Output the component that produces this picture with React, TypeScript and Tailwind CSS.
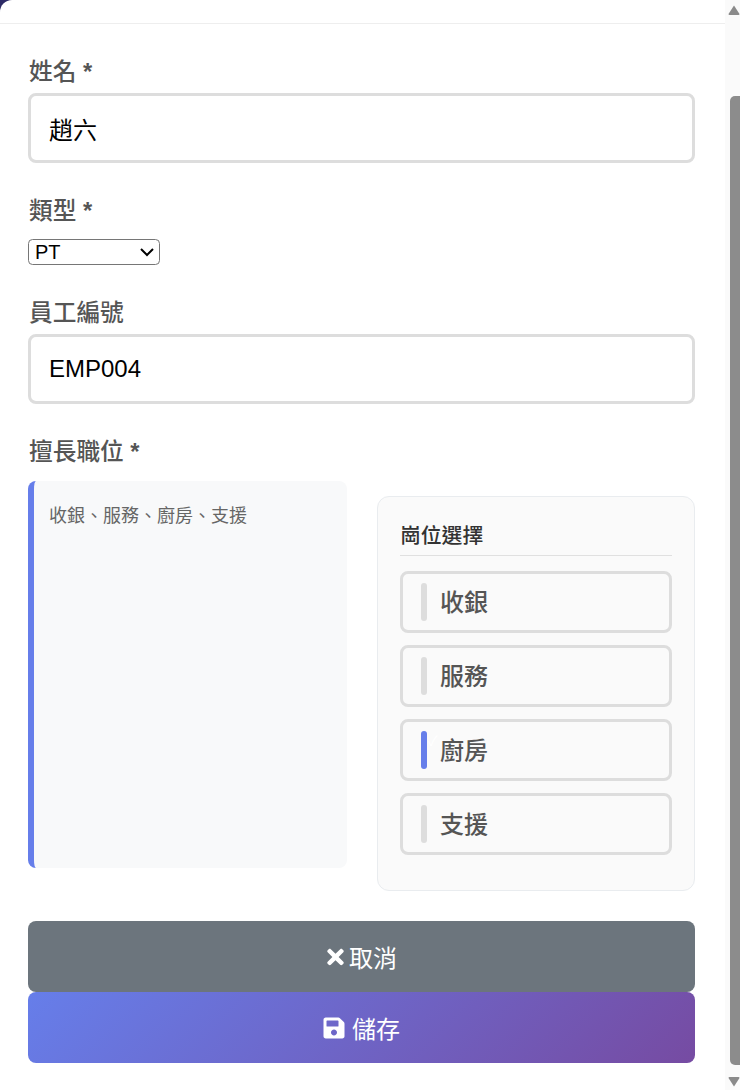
import { FaTimes, FaSave } from "react-icons/fa";

const positions = [
  { name: "收銀", selected: false },
  { name: "服務", selected: false },
  { name: "廚房", selected: true },
  { name: "支援", selected: false },
];

const font = "font-['Liberation_Sans','Noto_Sans_CJK_TC',sans-serif]";

function Label({ text, required, className = "" }: { text: string; required?: boolean; className?: string }) {
  return (
    <label className={`block text-[23.7px] leading-[34px] font-medium text-[#555] ml-px ${className}`}>
      {text}
      {required && <span className="font-bold"> *</span>}
    </label>
  );
}

function TextField({ value }: { value: string }) {
  return (
    <input
      readOnly
      value={value}
      className="block w-full h-[70px] border-[3px] border-[#ddd] rounded-lg pl-[18px] text-[24px] text-black bg-white outline-none"
    />
  );
}

function Scrollbar() {
  return (
    <aside className="w-[15px] bg-[#fafafa] flex flex-col items-end shrink-0">
      <svg width="12" height="10" viewBox="0 0 12 10" className="mt-[5px] shrink-0">
        <path d="M6 0.5 L11.5 9 Q11.5 10 10.5 10 L1.5 10 Q0.5 10 0.5 9 Z" fill="#8a8a8a" />
      </svg>
      <div className="w-[10px] h-[969px] mt-[81px] bg-[#8c8c8c] rounded-l-[5px] shrink-0" />
      <svg width="12" height="10" viewBox="0 0 12 10" className="mt-[12px] shrink-0">
        <path d="M6 9.5 L11.5 1 Q11.5 0 10.5 0 L1.5 0 Q0.5 0 0.5 1 Z" fill="#8a8a8a" />
      </svg>
    </aside>
  );
}

export default function App() {
  return (
    <div className={`w-[740px] h-[1090px] overflow-hidden flex bg-[#2d2a66] ${font}`}>
      <main className="flex-1 bg-white rounded-tl-[12px]">
        <div className="h-6 border-b border-[#eee]" />
        <form className="pt-[31px] pl-[28px] pr-[30px]">
          <Label text="姓名" required className="mb-[4px]" />
          <TextField value="趙六" />

          <Label text="類型" required className="mt-[31px] mb-[11px]" />
          {/* native select at 1.5x so the arrow and padding scale with it */}
          <select className="block w-[88px] h-[17.33px] [zoom:1.5] appearance-auto border border-[#767676] rounded-[3px] text-[13.33px] text-black bg-white">
            <option>PT</option>
          </select>

          <Label text="員工編號" className="mt-[31px] mb-[4px]" />
          <TextField value="EMP004" />

          <Label text="擅長職位" required className="mt-[31px] mb-[12px]" />
          <div className="flex items-start gap-[30px]">
            <div className="w-[319px] h-[387px] bg-[#f8f9fa] border-l-[6px] border-[#667eea] rounded-lg pl-[15px] pt-[21px] text-[18px] leading-[28px] text-[#666]">
              收銀、服務、廚房、支援
            </div>
            <div className="flex-1 mt-[15px] h-[395px] bg-[#fafafa] border border-[#e9ecef] rounded-[12px] pt-[24px] px-[22px]">
              <h4 className="text-[20.8px] leading-[30px] font-medium text-[#333] pb-[4px] border-b border-[#e0e0e0]">崗位選擇</h4>
              <div className="flex flex-col gap-[12px] mt-[15px]">
                {positions.map((p) => (
                  <div key={p.name} className="relative h-[62px] border-[3px] border-[#ddd] rounded-lg flex items-center pl-[18px] gap-[13px]">
                    <span className={`w-[6px] h-[38px] rounded-[3px] ${p.selected ? "bg-[#667eea]" : "bg-[#ddd]"}`} />
                    {p.selected && (
                      <span className="absolute left-[25px] top-[9px] text-[14px] leading-[20px] text-white">✓</span>
                    )}
                    <span className="text-[24px] font-medium text-[#555] pt-[2px]">{p.name}</span>
                  </div>
                ))}
              </div>
            </div>
          </div>

          <div className="mt-[30px] flex flex-col">
            <button type="button" className="h-[71px] pt-[2px] rounded-lg bg-[#6c757d] text-white text-[24px] flex items-center justify-center gap-[4px]">
              <FaTimes className="w-[19px] h-[24px]" />
              <span className="pt-[3px]">取消</span>
            </button>
            <button type="button" className="h-[71px] pt-[2px] rounded-lg bg-[linear-gradient(135deg,#667eea_0%,#764ba2_100%)] text-white text-[24px] flex items-center justify-center gap-[7px]">
              <FaSave className="w-[22px] h-[24px]" />
              <span className="pt-[3px]">儲存</span>
            </button>
          </div>
        </form>
      </main>
      <Scrollbar />
    </div>
  );
}
